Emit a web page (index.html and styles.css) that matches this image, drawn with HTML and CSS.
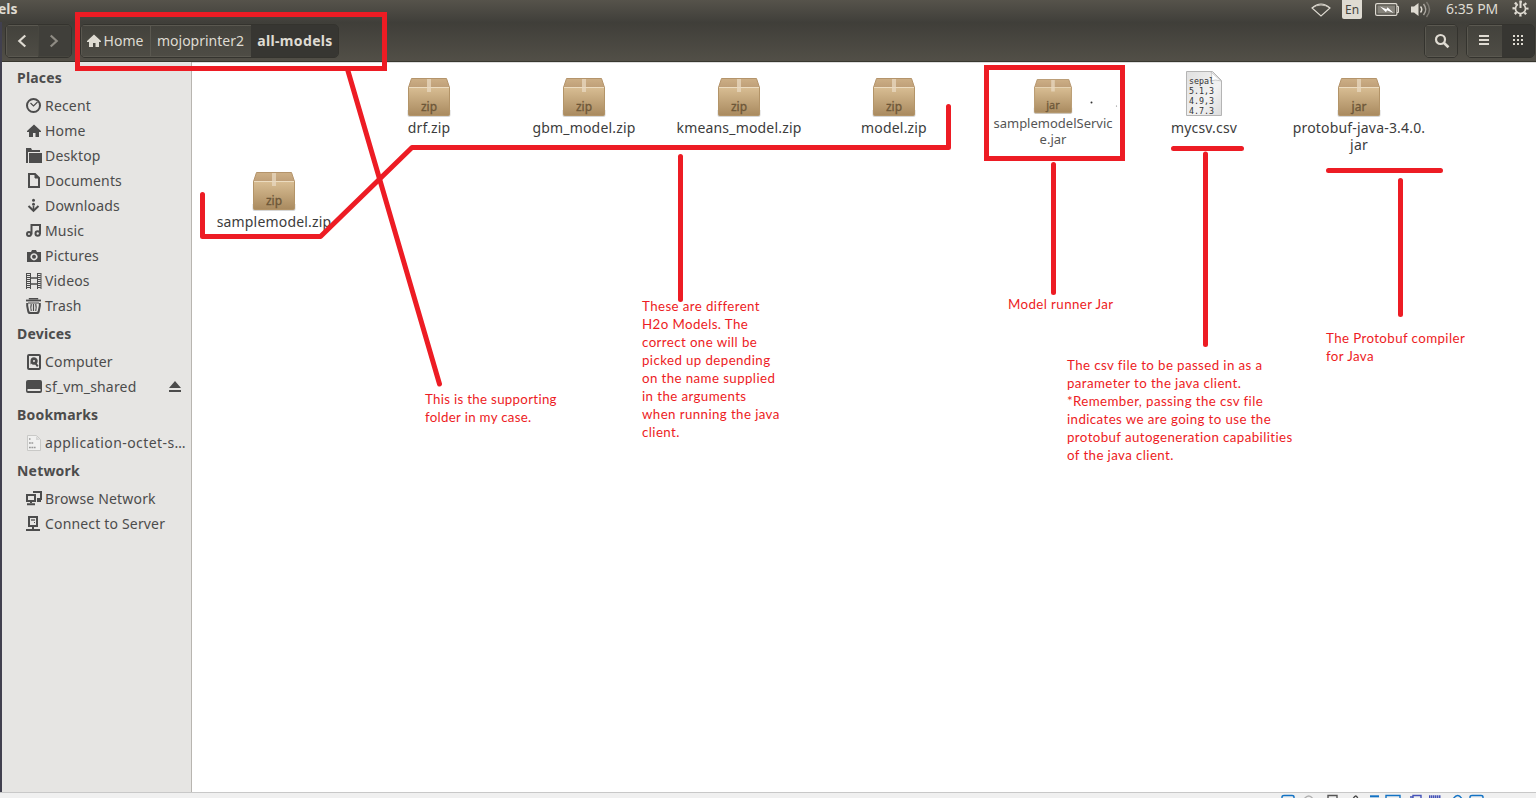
FILE: index.html
```html
<!DOCTYPE html>
<html lang="en">
<head>
<meta charset="utf-8">
<title>all-models</title>
<link rel="stylesheet" href="styles.css">
</head>
<body>
<svg class="defs" width="0" height="0">
  <defs>
    <linearGradient id="front" x1="0" y1="0" x2="0" y2="1"><stop offset="0" stop-color="#d8bd93"/><stop offset="1" stop-color="#a98a5f"/></linearGradient>
    <linearGradient id="lid" x1="0" y1="0" x2="0" y2="1"><stop offset="0" stop-color="#cdaf86"/><stop offset="1" stop-color="#bf9f78"/></linearGradient>
    <linearGradient id="sheet" x1="0" y1="0" x2="1" y2="1"><stop offset="0" stop-color="#e0e0e0"/><stop offset=".6" stop-color="#f2f2f2"/><stop offset="1" stop-color="#dcdcdc"/></linearGradient>
    <symbol id="box" viewBox="0 0 44 40">
      <path d="M.5 32v5q0 2 2 2h39q2 0 2-2v-5z" fill="#000" opacity=".16"/>
      <path d="M4.500.5h35l3 9h-41z" fill="url(#lid)" stroke="#b4946b"/>
      <path d="M1.500 9.500h41v27q0 1-1 1h-39q-1 0-1-1z" fill="url(#front)" stroke="#b39468"/>
      <path d="M2 9.500h40" stroke="#ecdcc0"/>
      <path d="M20 1h4v13h-4z" fill="#e8d8c0" opacity=".75"/>
    </symbol>
    <symbol id="home" viewBox="0 0 16 16"><path d="M8 1.500 1 8v1h2v5h4v-4h2.500v4H13V9h2V8z"/></symbol>
  </defs>
</svg>

<header class="panel">
  <span class="panel-title">els</span>
  <div class="indicators">
    <svg class="wifi" width="20" height="14" viewBox="0 0 20 14"><path d="M1 5Q10-3 19 5L10 13z" fill="none" stroke="#dfdbd2" stroke-width="1.1"/><path d="M1 5Q10-1 19 5" fill="none" stroke="#dfdbd2" stroke-width=".8"/></svg>
    <span class="lang">En</span>
    <svg class="battery" width="25" height="13" viewBox="0 0 25 13"><rect x=".6" y=".6" width="21.300" height="11.800" rx="1.500" fill="none" stroke="#dfdbd2" stroke-width="1.200"/><path d="M22 3.500h1.500v6H22" fill="none" stroke="#dfdbd2"/><rect x="2.500" y="2.500" width="17.500" height="8" fill="#86837b"/><path d="m5 3.500 6.500 2.800 1-2 6 5.700-6.500-2.800-1 2z" fill="#fff"/></svg>
    <svg class="volume" width="21" height="17" viewBox="0 0 21 17"><path d="M0 5.500h3L7.500 2v13L3 11.500H0z" fill="#dfdbd2"/><g fill="none" stroke-width="1.500"><path d="M9.500 5.500q2.500 3 0 6" stroke="#dfdbd2"/><path d="M12.500 3q4.500 5.500 0 11" stroke="#aaa69f"/><path d="M15.500 1q6 7.500 0 15" stroke="#7c7972"/></g></svg>
    <span class="clock">6:35 PM</span>
    <svg class="gear" width="17" height="17" viewBox="0 0 17 17" fill="none" stroke="#dfdbd2"><circle cx="8.500" cy="8.500" r="6.700" stroke-width="2.600" stroke-dasharray="2.200 3.062" stroke-dashoffset="1.100"/><path d="M5.900 4.300A5 5 0 1 0 11.100 4.300" stroke-width="1.700"/><path d="M8.500 1v7" stroke-width="2"/></svg>
  </div>
</header>

<div class="window">
  <nav class="toolbar">
    <div class="group nav">
      <button class="btn"><svg width="10" height="14" viewBox="0 0 10 14"><path d="m8.300 1.500-6 5.500 6 5.500" fill="none" stroke="#dfdbd2" stroke-width="2.200"/></svg></button>
      <button class="btn dim"><svg width="10" height="14" viewBox="0 0 10 14"><path d="m1.700 1.500 6 5.500-6 5.500" fill="none" stroke="#8f8c84" stroke-width="2.200"/></svg></button>
    </div>
    <div class="group path">
      <button class="btn home"><svg width="16" height="16" fill="#dfdbd2"><use href="#home"/></svg><span>Home</span></button>
      <button class="btn mojo"><span>mojoprinter2</span></button>
      <button class="btn on"><span>all-models</span></button>
    </div>
    <div class="group search">
      <button class="btn"><svg width="16" height="16" viewBox="0 0 16 16" fill="none" stroke="#dfdbd2"><circle cx="6.500" cy="6.500" r="4.500" stroke-width="2.200"/><path d="m10 10 4.500 4.300" stroke-width="2.600"/></svg></button>
    </div>
    <div class="group views">
      <button class="btn"><svg width="10" height="11" viewBox="0 0 10 11" fill="#dfdbd2"><path d="M0 0h10v2H0zM0 4h10v2H0zM0 8h10v2H0z"/></svg></button>
      <button class="btn on"><svg width="10" height="11" viewBox="0 0 10 11" fill="none" stroke="#dfdbd2" stroke-width="2" stroke-dasharray="2 2"><path d="M0 1h10M0 5h10M0 9h10"/></svg></button>
    </div>
  </nav>

  <div class="body">
    <aside class="sidebar">
      <h2>Places</h2>
      <ul>
        <li><svg class="ico" viewBox="0 0 16 16" fill="none" stroke="#4c4c4c"><circle cx="7.500" cy="7.500" r="6.500" stroke-width="2"/><path d="m4.500 5 3 3 4-4" stroke-width="1.200"/></svg><span>Recent</span></li>
        <li><svg class="ico" fill="#4c4c4c"><use href="#home"/></svg><span>Home</span></li>
        <li><svg class="ico" viewBox="0 0 16 16" fill="#4c4c4c"><path d="M0 0h5l1 2h8v2H2v11H0z"/><path d="M3 5h13v10H3z"/></svg><span>Desktop</span></li>
        <li><svg class="ico" viewBox="0 0 16 16" fill="none" stroke="#4c4c4c" stroke-width="2"><path d="M3 1h6l4 4v9H3z"/><path d="M9 1v4h4" fill="#4c4c4c" stroke-width="1"/></svg><span>Documents</span></li>
        <li><svg class="ico" viewBox="0 0 16 16" fill="#4c4c4c"><circle cx="7.500" cy="2.300" r="1.500"/><circle cx="7.500" cy="6.300" r="1.500"/><path d="M6.700 8h1.600v4H6.700z"/><path d="m2.500 8 5 4.800 5-4.800" fill="none" stroke="#4c4c4c" stroke-width="2"/></svg><span>Downloads</span></li>
        <li><svg class="ico" viewBox="0 0 16 16" fill="none" stroke="#4c4c4c" stroke-width="2"><circle cx="3" cy="11" r="2"/><circle cx="11.700" cy="10.500" r="2.200"/><path d="M5.500 11.500V2H14v9"/></svg><span>Music</span></li>
        <li><svg class="ico" viewBox="0 0 16 16" fill="#4c4c4c"><path fill-rule="evenodd" d="M1 4h4l1-2h4l1 2h4v10H1zM8 5.200a3.600 3.600 0 1 0 .01 0z"/><circle cx="8" cy="8.800" r="2"/></svg><span>Pictures</span></li>
        <li><svg class="ico" viewBox="0 0 16 16" fill="none" stroke="#4c4c4c"><path d="M.5 0v16M4.500 0v16M11.500 0v16M15 0v16"/><path d="M2.500 0v16M13.300 0v16" stroke-width="3" stroke-dasharray="1 1"/><path d="M4 5h8M4 11h8" stroke-width="1.400"/></svg><span>Videos</span></li>
        <li><svg class="ico" viewBox="0 0 16 16" fill="none" stroke="#4c4c4c"><path d="M3.500 1.500V.7h8v.8" stroke-width="1.400"/><path d="M0 2.500h15" stroke-width="1.800"/><path d="M1.200 5v3l1 5q.3 2 2 2h6.600q1.700 0 2-2l1-5V5" stroke-width="2"/><path d="M2 5h11M5.300 6q-1 3.500 0 7M7.500 6v7M9.700 6q1 3.500 0 7" stroke-width="1.200"/></svg><span>Trash</span></li>
      </ul>
      <h2>Devices</h2>
      <ul>
        <li><svg class="ico" viewBox="0 0 16 16"><rect x="2" y="1" width="12" height="14" rx="1" fill="none" stroke="#4c4c4c" stroke-width="2"/><path fill-rule="evenodd" fill="#4c4c4c" d="M8 3.200a3.800 3.800 0 1 1-3 6.200L4.500 11V7A3.800 3.800 0 0 1 8 3.200zM8 6a1 1 0 1 0 .01 0z"/><path d="m8.500 8 3.300 4.300" stroke="#4c4c4c" stroke-width="2"/></svg><span>Computer</span></li>
        <li><svg class="ico" viewBox="0 0 16 16" fill="#4c4c4c"><path fill-rule="evenodd" d="M2 1h12q2 0 2 2v9q0 2-2 2H2q-2 0-2-2V3q0-2 2-2zM1.500 10h13v2h-13z"/></svg><span>sf_vm_shared</span><svg class="eject" width="12" height="12" viewBox="0 0 12 12" fill="#4c4c4c"><path d="M6 0 0 7h12zM0 9h12v2H0z"/></svg></li>
      </ul>
      <h2>Bookmarks</h2>
      <ul>
        <li class="wide"><svg class="ico" viewBox="0 0 16 16"><path d="M1.500.5h9l4 4v11h-13z" fill="#f0f0ef" stroke="#c9c9c7"/><path d="M10 1v4h4z" fill="#d6d6d5"/><g fill="none" stroke="#999" stroke-width="1.500"><path d="M3 4h1.500"/><path d="M3 8h4.500M3 12.500h7" stroke-dasharray="1.800 .6"/></g></svg><span>application-octet-s…</span></li>
      </ul>
      <h2>Network</h2>
      <ul>
        <li><svg class="ico" viewBox="0 0 16 16" fill="none" stroke="#4c4c4c" stroke-width="2"><path d="M1 4h8v6H1z"/><path d="M7 1h8v7h-4"/><path d="M5 10v2M1 13.200h8M11 10h4"/></svg><span>Browse Network</span></li>
        <li><svg class="ico" viewBox="0 0 16 16" fill="none" stroke="#4c4c4c" stroke-width="2"><path d="M3 1h8v9H3z"/><path d="M5 4h4" stroke-width="1.300"/><path d="M8 6.500h1" stroke-width="1"/><path d="M7 10v4M0 14h14"/></svg><span>Connect to Server</span></li>
      </ul>
    </aside>

    <main class="files">
      <div class="file first"><svg class="pkg"><use href="#box"/><text x="22" y="33">zip</text></svg><p>drf.zip</p></div>
      <div class="file"><svg class="pkg"><use href="#box"/><text x="22" y="33">zip</text></svg><p>gbm_model.zip</p></div>
      <div class="file"><svg class="pkg"><use href="#box"/><text x="22" y="33">zip</text></svg><p>kmeans_model.zip</p></div>
      <div class="file"><svg class="pkg"><use href="#box"/><text x="22" y="33">zip</text></svg><p>model.zip</p></div>
      <div class="file small"><svg class="pkg" viewBox="0 0 44 40"><use href="#box"/><text x="22" y="33">jar</text></svg><p>samplemodelServic<br>e.jar</p></div>
      <div class="file"><svg class="doc" width="38" height="48" viewBox="0 0 38 48"><path d="M1.500 1.500h26l9 9v35h-35z" fill="url(#sheet)" stroke="#b4b4b4"/><path d="M26 2q2 6-1 9 6-2 11 0z" fill="#fff" stroke="#c0c0c0" stroke-width=".8"/><g class="mono"><text x="4" y="14">sepal</text><text x="4" y="24">5.1,3</text><text x="4" y="34">4.9,3</text><text x="4" y="44">4.7.3</text></g></svg><p>mycsv.csv</p></div>
      <div class="file"><svg class="pkg"><use href="#box"/><text x="22" y="33">jar</text></svg><p>protobuf-java-3.4.0.<br>jar</p></div>
      <div class="file row2"><svg class="pkg"><use href="#box"/><text x="22" y="33">zip</text></svg><p>samplemodel.zip</p></div>
    </main>
  </div>
</div>

<footer class="status">
  <svg width="204" height="4" viewBox="0 0 204 4" fill="none" stroke-width="1.400"><path d="M1 5V3q0-1.500 2-1.500h8q2 0 2 1.500v2" stroke="#1272c4"/><path d="M23 5q5-6 9 0" stroke="#b0b0b0"/><path d="M47 5V1.500h9V5" stroke="#555"/><path d="M72 5q3-6 5 0" stroke="#444"/><path d="M89 2.300h9" stroke="#1272c4" stroke-width="2"/><path d="M105 5V1.500h14V5" stroke="#1272c4"/><path d="M129 3h3v2M132 5V1.500h8V5" stroke="#4453b8"/><path d="M148 2.800h12" stroke="#4453b8" stroke-width="3" stroke-dasharray="1.500 .5"/><path d="M172 5q5-7 9 0" stroke="#1272c4"/><path d="M189 5V3q0-1.500 2-1.500h9q2 0 2 1.500v2" stroke="#1272c4"/></svg>
</footer>

<svg class="marks" width="1536" height="798" viewBox="0 0 1536 798">
  <g fill="none" stroke="#ed1c24" stroke-width="5" stroke-linecap="round">
    <path d="M77.500 14.500h307v54h-307z"/>
    <path d="M348 71 439.500 384"/>
    <path d="M202.500 194.500v42h118l91.500-89h536.500v-41" stroke-linejoin="round"/>
    <path d="M680.500 156.500v143"/>
    <path d="M986.500 67.500h136v91h-136z"/>
    <path d="M1053.500 164.500v128"/>
    <path d="M1173.500 148.500h68M1205.500 154v190.500"/>
    <path d="M1328.500 170.500h112M1400.500 180.500v134"/>
  </g>
  <circle cx="1091.500" cy="102.500" r="1" fill="#333"/>
  <circle cx="1116.500" cy="106" r=".6" fill="#777"/>
</svg>
<p class="note n-folder">This is the supporting<br>folder in my case.</p>
<p class="note n-models">These are different<br>H2o Models. The<br>correct one will be<br>picked up depending<br>on the name supplied<br>in the arguments<br>when running the java<br>client.</p>
<p class="note n-runner">Model runner Jar</p>
<p class="note n-csv">The csv file to be passed in as a<br>parameter to the java client.<br>*Remember, passing the csv file<br>indicates we are going to use the<br>protobuf autogeneration capabilities<br>of the java client.</p>
<p class="note n-proto">The Protobuf compiler<br>for Java</p>
</body>
</html>
```

FILE: styles.css
```css
* { box-sizing: border-box; }
body {
  margin: 0;
  width: 1536px;
  height: 798px;
  overflow: hidden;
  display: flex;
  flex-direction: column;
  position: relative;
  background: #fff;
  color: #3c3c3c;
  font: 14px/18px "Noto Sans", "Open Sans", sans-serif;
}
p, h2, ul { margin: 0; padding: 0; }
ul { list-style: none; }
.defs { position: absolute; }

.panel {
  height: 22px;
  flex: none;
  display: flex;
  justify-content: space-between;
  background: linear-gradient(#56534b, #403f3a);
  color: #dfdbd2;
}
.panel-title { margin-left: -2px; font-weight: 700; line-height: 17px; }
.indicators { display: flex; align-items: flex-start; padding-right: 7px; }
.wifi { margin: 3px 11px 0 0; }
.lang {
  width: 20px;
  height: 19px;
  margin-right: 13px;
  background: #dfdbd2;
  color: #45443f;
  border-radius: 0 0 2px 2px;
  font-size: 12px;
  line-height: 19px;
  text-align: center;
}
.battery { margin: 3px 11px 0 0; }
.volume { margin: 1px 14px 0 0; }
.clock { width: 53px; margin-right: 13px; line-height: 18px; white-space: nowrap; letter-spacing: -.05px; }

.window {
  flex: 1;
  min-height: 0;
  display: flex;
  flex-direction: column;
  border-left: 2px solid #41404f;
}
.toolbar {
  height: 40px;
  flex: none;
  display: flex;
  align-items: flex-start;
  padding: 2px 1px 0 3px;
  background: linear-gradient(#3f3e39, #524f47);
  border-bottom: 1px solid #38372f;
}
.group {
  height: 34px;
  display: flex;
  border: 1px solid #34332e;
  border-radius: 5px;
  overflow: hidden;
}
.btn {
  display: flex;
  align-items: center;
  justify-content: center;
  padding: 0 0 1px;
  border: 1px solid #5a5850;
  border-right: 0;
  background: linear-gradient(#43423c, #4e4c45);
  color: #dfdbd2;
  font: inherit;
}
.btn.on { background: #373632; border-color: #373632; font-weight: 700; }
.btn.dim { background: #403f3a; border-color: #47463f; }
.nav { width: 67px; margin-right: 8px; }
.nav .btn { width: 32px; padding-right: 2px; }
.nav .dim { flex: 1; }
.path { width: 259px; letter-spacing: .1px; }
.path .home { width: 69px; gap: 2px; padding-right: 3px; }
.path .mojo { width: 101px; padding-right: 1px; }
.path .on { flex: 1; letter-spacing: .35px; }
.search { width: 34px; margin-left: auto; margin-right: 8px; }
.search .btn, .views .btn { flex: 1; }
.views { width: 69px; }
.views .btn:first-child { padding-right: 2px; }

.body { flex: 1; min-height: 0; display: flex; }
.sidebar {
  width: 190px;
  background: #e6e5e3;
  border-right: 1px solid #b8b5b0;
  color: #4c4c4c;
  letter-spacing: .17px;
}
.sidebar h2 { height: 31px; padding-left: 15px; font-size: 14px; line-height: 31px; letter-spacing: .2px; }
.sidebar li { height: 25px; padding-left: 24px; display: flex; align-items: center; white-space: nowrap; }
.sidebar .wide { letter-spacing: .42px; }
.ico { width: 16px; height: 16px; flex: none; margin-right: 3px; }
.eject { margin-left: auto; margin-right: 10px; }

.files {
  flex: 1;
  display: grid;
  grid-template-columns: repeat(8, 155px);
  grid-auto-rows: 94px;
  padding-left: 4px;
  border-top: 1px solid #dedede;
}
.file {
  display: flex;
  flex-direction: column;
  align-items: center;
  padding-top: 15px;
  text-align: center;
  line-height: 17px;
  letter-spacing: .18px;
  white-space: nowrap;
}
.file.first { grid-column: 2; }
.file.row2 { grid-column: 1; }
.file p { padding-left: 1px; }
.pkg { width: 44px; height: 40px; flex: none; margin-bottom: 1px; }
.pkg text { font: 12px "Noto Sans", sans-serif; fill: #6d5738; stroke: #6d5738; stroke-width: .3; text-anchor: middle; letter-spacing: 0; }
.doc { margin: -8px 0 1px; flex: none; }
.mono { font: 8.300px "DejaVu Sans Mono", monospace; fill: #333; letter-spacing: 0; }
.file.small { padding: 16px 0 0 8px; font-size: 13px; line-height: 15.500px; letter-spacing: 0; color: #555; }
.small .pkg { width: 40px; height: 36px; margin-bottom: 1px; }

.status {
  height: 6px;
  flex: none;
  padding: 1px 0 0 1281px;
  background: #f0f0f0;
  border-top: 1px solid #c8c8c8;
  display: flex;
}

.marks { position: absolute; left: 0; top: 0; }
.note {
  position: absolute;
  color: #ed1c24;
  font: 13.300px/18px Lato, "Open Sans", sans-serif;
  letter-spacing: .4px;
  white-space: nowrap;
}
.n-folder { left: 425px; top: 390px; letter-spacing: .3px; }
.n-models { left: 642px; top: 297px; }
.n-runner { left: 1008px; top: 295px; }
.n-csv { left: 1067px; top: 356px; }
.n-proto { left: 1326px; top: 329px; }
```
